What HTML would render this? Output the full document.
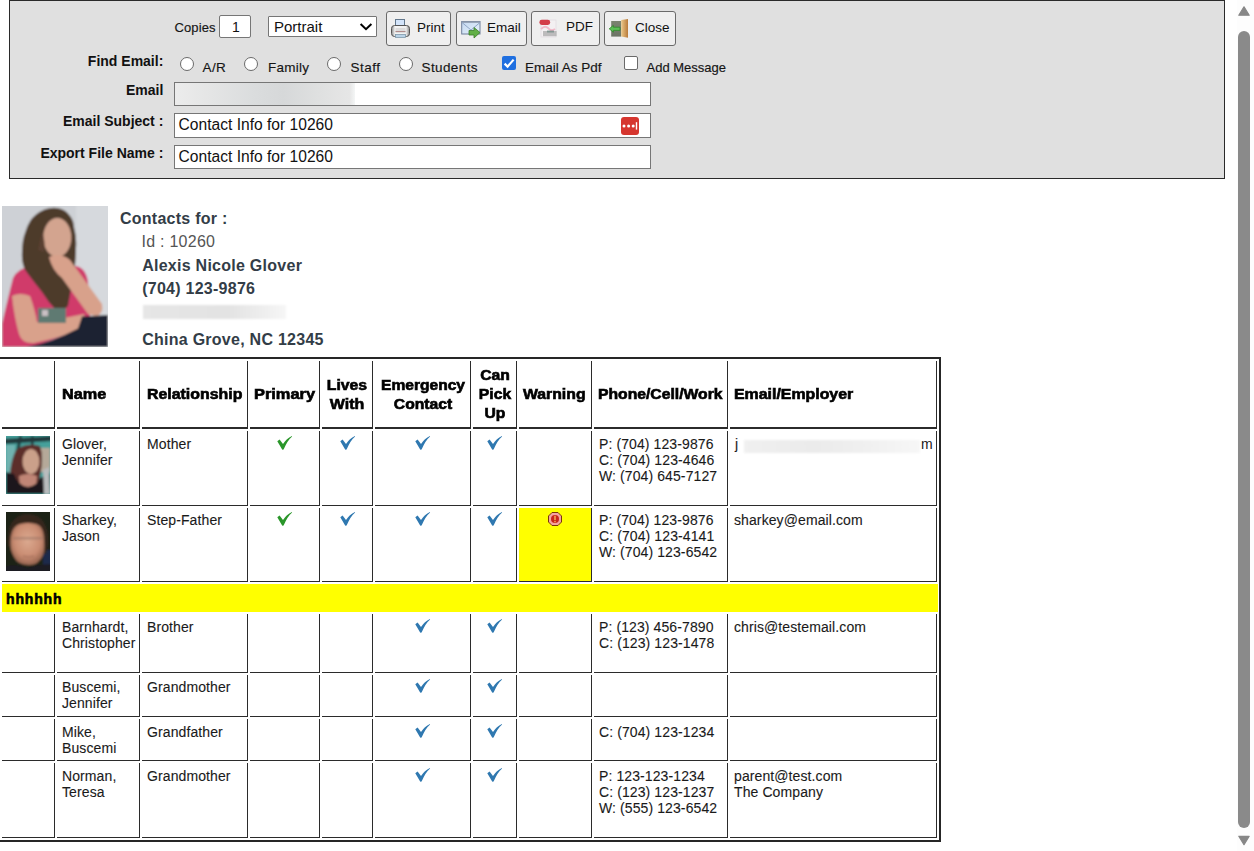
<!DOCTYPE html>
<html><head><meta charset="utf-8"><style>
html,body{margin:0;padding:0;}
body{width:1254px;height:851px;overflow:hidden;position:relative;background:#fff;font-family:"Liberation Sans", sans-serif;}
.t{position:absolute;white-space:nowrap;}
.box{position:absolute;border:1px solid #767676;background:#fff;}
.btn{position:absolute;border:1px solid #6a6a6a;border-radius:3px;background:#efefef;}
.radio{position:absolute;width:12px;height:12px;border:1px solid #6a6a6a;border-radius:50%;background:#fff;}
.cell{position:absolute;box-sizing:border-box;border-style:solid;border-color:transparent #2b2b2b #2b2b2b transparent;border-width:0 1px 1px 0;}
</style></head><body>
<div style="position:absolute;left:9px;top:0;width:1214px;height:177px;border:1px solid #2a2a2a;background:#e0e0e0"></div>
<div class="t" style="left:174.5px;top:18px;font-size:13px;line-height:20px;font-weight:normal;color:#151515;-webkit-text-stroke:0.15px #151515;letter-spacing:0.1px">Copies</div>
<div class="box" style="left:219px;top:15px;width:30px;height:21px;border-radius:2px"></div>
<div class="t" style="left:36px;width:400px;text-align:center;top:17px;font-size:14px;line-height:20px;font-weight:normal;color:#111;">1</div>
<div class="box" style="left:268px;top:16px;width:107px;height:19px;border-radius:1px"></div>
<div class="t" style="left:274px;top:16.5px;font-size:15px;line-height:20px;font-weight:normal;color:#111;">Portrait</div>
<svg style="position:absolute;left:359px;top:21px" width="14" height="10" viewBox="0 0 14 10"><path d="M1.6 3 L7 8.2 L12.4 3" fill="none" stroke="#000" stroke-width="2"/></svg>
<div class="btn" style="left:386px;top:11px;width:63px;height:33px"></div>
<svg style="position:absolute;left:390px;top:18px" width="21" height="21" viewBox="0 0 21 21"><defs><linearGradient id="pg" x1="0" y1="0" x2="1" y2="0"><stop offset="0" stop-color="#8c8c8c"/><stop offset="0.2" stop-color="#f4f4f4"/><stop offset="0.8" stop-color="#f0f0f0"/><stop offset="1" stop-color="#8a8a8a"/></linearGradient></defs><rect x="5.5" y="1.5" width="9" height="8" fill="#d3e4fa" stroke="#62778c" stroke-width="1"/><rect x="1.5" y="7.5" width="18" height="11" rx="3" fill="url(#pg)" stroke="#555" stroke-width="1"/><rect x="5.5" y="10" width="10" height="5" fill="#dcdcdc"/><rect x="5.5" y="13" width="10" height="1" fill="#b08a8a"/><rect x="5.5" y="16.5" width="10" height="3" fill="#b9d2e6" stroke="#7f99ab" stroke-width="0.8"/></svg>
<div class="t" style="left:417px;top:18px;font-size:13.5px;line-height:20px;font-weight:normal;color:#111;">Print</div>
<div class="btn" style="left:456px;top:11px;width:69px;height:33px"></div>
<svg style="position:absolute;left:460px;top:20px" width="22" height="19" viewBox="0 0 22 19"><defs><linearGradient id="eg" x1="0" y1="0" x2="1" y2="1"><stop offset="0" stop-color="#c4d8f0"/><stop offset="1" stop-color="#e6f2fb"/></linearGradient></defs><rect x="1.7" y="1.5" width="18.3" height="12.5" fill="url(#eg)" stroke="#6f7f9a" stroke-width="1"/><rect x="1.7" y="1.2" width="18.3" height="1.6" fill="#8a97aa"/><path d="M2 2.5 L11 10 L20 2.5" fill="none" stroke="#90a6c6" stroke-width="1"/><path d="M9 10.5 h5 v-3 l6 5 l-6 5.5 v-3 h-5z" fill="#62b046" stroke="#3a7e28" stroke-width="0.8" stroke-linejoin="round"/></svg>
<div class="t" style="left:487px;top:18px;font-size:13.5px;line-height:20px;font-weight:normal;color:#111;">Email</div>
<div class="btn" style="left:531px;top:11px;width:67px;height:33px"></div>
<svg style="position:absolute;left:538px;top:18px" width="20" height="20" viewBox="0 0 20 20"><defs><filter id="pb" x="-20%" y="-20%" width="140%" height="140%"><feGaussianBlur stdDeviation="0.5"/></filter></defs><g filter="url(#pb)"><rect x="3" y="2" width="15" height="17" fill="#f3f0f2" stroke="#e2dde0" stroke-width="0.8"/><rect x="1.4" y="1.8" width="10.8" height="5.2" rx="2.4" fill="#d33c4a"/><path d="M3 11 Q7 7 10 10 Q13 14 17 11" fill="none" stroke="#f0b8c8" stroke-width="2"/><rect x="5" y="13" width="13.6" height="5.2" fill="#a9a9a9" opacity="0.75"/><rect x="9" y="12.5" width="7" height="2" fill="#5f7f78" opacity="0.6"/></g></svg>
<div class="t" style="left:566px;top:17px;font-size:13.5px;line-height:20px;font-weight:normal;color:#111;">PDF</div>
<div class="btn" style="left:604px;top:11px;width:70px;height:33px"></div>
<svg style="position:absolute;left:608px;top:18px" width="22" height="21" viewBox="0 0 22 21"><defs><linearGradient id="dg" x1="0" y1="0" x2="1" y2="0"><stop offset="0" stop-color="#ecc888"/><stop offset="1" stop-color="#b87a3a"/></linearGradient><linearGradient id="fgc" x1="0" y1="0" x2="0" y2="1"><stop offset="0" stop-color="#7b8470"/><stop offset="1" stop-color="#6c7466"/></linearGradient></defs><rect x="3.2" y="3" width="10" height="15.6" fill="url(#fgc)"/><path d="M13.2 2 L20 1 L20 19.8 L13.2 18.6Z" fill="url(#dg)"/><path d="M1.2 10.8 L5.4 7.4 L5.4 9.2 L12 9.2 L12 12.4 L5.4 12.4 L5.4 14.2Z" fill="#5cbf56" stroke="#2f8a2a" stroke-width="0.8" stroke-linejoin="round"/></svg>
<div class="t" style="left:635px;top:18px;font-size:13.5px;line-height:20px;font-weight:normal;color:#111;">Close</div>
<div class="t" style="right:1090.7px;top:51px;font-size:14px;line-height:20px;font-weight:bold;color:#111;">Find Email:</div>
<div class="radio" style="left:180px;top:56.5px"></div>
<div class="radio" style="left:244px;top:56.5px"></div>
<div class="radio" style="left:327px;top:56.5px"></div>
<div class="radio" style="left:399px;top:56.5px"></div>
<div class="t" style="left:202.5px;top:58px;font-size:13.5px;line-height:20px;font-weight:normal;color:#151515;-webkit-text-stroke:0.15px #151515;letter-spacing:0.4px">A/R</div>
<div class="t" style="left:268px;top:58px;font-size:13.5px;line-height:20px;font-weight:normal;color:#151515;-webkit-text-stroke:0.15px #151515;letter-spacing:0.25px">Family</div>
<div class="t" style="left:350.5px;top:58px;font-size:13.5px;line-height:20px;font-weight:normal;color:#151515;-webkit-text-stroke:0.15px #151515;letter-spacing:0.5px">Staff</div>
<div class="t" style="left:421.5px;top:58px;font-size:13.5px;line-height:20px;font-weight:normal;color:#151515;-webkit-text-stroke:0.15px #151515;letter-spacing:0.4px">Students</div>
<div style="position:absolute;left:502px;top:56px;width:14px;height:14px;border-radius:2px;background:#1f6fe0"></div>
<svg style="position:absolute;left:502px;top:56px" width="14" height="14" viewBox="0 0 14 14"><path d="M2.6 7.6 L5.6 10.6 L11.6 3.6" fill="none" stroke="#fff" stroke-width="2.2"/></svg>
<div class="t" style="left:525px;top:58px;font-size:13.5px;line-height:20px;font-weight:normal;color:#151515;-webkit-text-stroke:0.15px #151515">Email As Pdf</div>
<div style="position:absolute;left:624px;top:56px;width:12px;height:12px;border-radius:2px;border:1px solid #6a6a6a;background:#fff"></div>
<div class="t" style="left:646.5px;top:58px;font-size:13px;line-height:20px;font-weight:normal;color:#151515;-webkit-text-stroke:0.15px #151515">Add Message</div>
<div class="t" style="right:1090.7px;top:80px;font-size:14px;line-height:20px;font-weight:bold;color:#111;">Email</div>
<div class="t" style="right:1090.7px;top:111px;font-size:14px;line-height:20px;font-weight:bold;color:#111;">Email Subject :</div>
<div class="t" style="right:1090.7px;top:143px;font-size:14px;line-height:20px;font-weight:bold;color:#111;">Export File Name :</div>
<div class="box" style="left:174px;top:82px;width:475px;height:22px"></div>
<div style="position:absolute;left:175px;top:83px;width:180px;height:22px;background:linear-gradient(90deg,#ececec 0%,#e4e5e5 20%,#dadcdd 45%,#d6d8d9 60%,#dfe0e0 80%,#e6e6e6 97%,#f4f6f6 100%)"></div>
<div class="box" style="left:174px;top:113px;width:475px;height:23px"></div>
<div class="box" style="left:174px;top:145px;width:475px;height:22px"></div>
<div class="t" style="left:178.6px;top:115px;font-size:15.6px;line-height:20px;font-weight:normal;color:#111;">Contact Info for 10260</div>
<div class="t" style="left:178.6px;top:147px;font-size:15.6px;line-height:20px;font-weight:normal;color:#111;">Contact Info for 10260</div>
<div style="position:absolute;left:621px;top:117px;width:18px;height:18px;border-radius:3px;background:#d6362f"></div>
<svg style="position:absolute;left:621px;top:117px" width="18" height="18" viewBox="0 0 18 18"><circle cx="3" cy="9" r="1.5" fill="#fff"/><circle cx="7.6" cy="9" r="1.5" fill="#fff"/><circle cx="12.2" cy="9" r="1.5" fill="#fff"/><rect x="14.8" y="5.2" width="1.4" height="7.4" fill="#fff"/></svg>
<svg style="position:absolute;left:2px;top:206px" width="106" height="141" viewBox="0 0 106 141">
<defs><filter id="bl" x="-10%" y="-10%" width="120%" height="120%"><feGaussianBlur stdDeviation="1.1"/></filter>
<clipPath id="cp"><rect width="106" height="141"/></clipPath></defs>
<rect width="106" height="141" fill="#d0d3d8"/>
<g clip-path="url(#cp)" filter="url(#bl)">
<rect x="-5" y="-5" width="116" height="151" fill="#ced1d6"/>
<rect x="74" y="-5" width="40" height="120" fill="#d6d9dd"/>
<path d="M11 72 Q16 62 30 60 L74 60 Q84 62 86 76 L88 112 L76 124 L30 141 L0 141 L0 118 Q4 100 11 72Z" fill="#d03a6a"/>
<path d="M52 1.7 Q62 2 66 7.6 Q72 14 72 21 Q75 32 74 42 Q74 52 73 59 Q70 78 66 100 Q60 106 54 104 Q46 96 40 86 Q32 76 26 68 Q19 60 20 46 Q20 34 23.7 25 Q27 14 34 8.5 Q42 2 52 1.7Z" fill="#4e3a2c"/>
<ellipse cx="55.3" cy="31.5" rx="14" ry="19.5" fill="#d3a48f"/>
<path d="M40 26 Q44 36 42 46 L36 44 Q38 34 40 26Z" fill="#5a4030"/>
<path d="M47 51 Q58 46 68 54 L100 98 Q102 108 94 110 L86 108 L60 72 Q50 64 47 51Z" fill="#d8a18b"/>
<path d="M10 90 Q18 86 28 90 Q33 104 35 116 Q50 114 62 112 L82 108 Q86 118 78 124 Q56 132 32 137 Q20 138 17 128 Q12 110 10 90Z" fill="#d9a18b"/>
<path d="M36 102 L64 102 L64 117 L36 117Z" fill="#5f7a72"/>
<path d="M40 104 L46 104 L46 110 L40 110Z" fill="#c9c0c4"/>
<path d="M25 141 Q50 136 76 122.4 L80 110.6 L106 109 L106 141Z" fill="#1c2130"/>
</g></svg>
<div class="t" style="left:120px;top:209px;font-size:16px;line-height:20px;font-weight:bold;color:#333d47;letter-spacing:0.25px">Contacts for :</div>
<div class="t" style="left:141.5px;top:232px;font-size:16px;line-height:20px;font-weight:normal;color:#555;letter-spacing:0.25px">Id : 10260</div>
<div class="t" style="left:142.2px;top:256px;font-size:16px;line-height:20px;font-weight:bold;color:#333d47;letter-spacing:0.26px">Alexis Nicole Glover</div>
<div class="t" style="left:142.2px;top:279px;font-size:16px;line-height:20px;font-weight:bold;color:#333d47;letter-spacing:0.26px">(704) 123-9876</div>
<div style="position:absolute;left:143px;top:305px;width:143px;height:14px;background:linear-gradient(90deg,#e6e6e6,#e3e3e3 60%,#ececec 80%,#f6f6f6);filter:blur(1px)"></div>
<div class="t" style="left:142.2px;top:330px;font-size:16px;line-height:20px;font-weight:bold;color:#333d47;letter-spacing:0.26px">China Grove, NC 12345</div>
<div style="position:absolute;left:-2px;top:357px;width:939px;height:481px;border:2px solid #262626"></div>
<div class="cell" style="left:2px;top:361px;width:53px;height:68px;border-bottom-width:2px;background:transparent"></div>
<div class="cell" style="left:57px;top:361px;width:83px;height:68px;border-bottom-width:2px;background:transparent"></div>
<div class="cell" style="left:142px;top:361px;width:106px;height:68px;border-bottom-width:2px;background:transparent"></div>
<div class="cell" style="left:250px;top:361px;width:70px;height:68px;border-bottom-width:2px;background:transparent"></div>
<div class="cell" style="left:322px;top:361px;width:51px;height:68px;border-bottom-width:2px;background:transparent"></div>
<div class="cell" style="left:375px;top:361px;width:96px;height:68px;border-bottom-width:2px;background:transparent"></div>
<div class="cell" style="left:473px;top:361px;width:44px;height:68px;border-bottom-width:2px;background:transparent"></div>
<div class="cell" style="left:519px;top:361px;width:73px;height:68px;border-bottom-width:2px;background:transparent"></div>
<div class="cell" style="left:594px;top:361px;width:134px;height:68px;border-bottom-width:2px;background:transparent"></div>
<div class="cell" style="left:730px;top:361px;width:207px;height:68px;border-bottom-width:2px;background:transparent"></div>
<div class="cell" style="left:2px;top:431px;width:53px;height:75px;border-bottom-width:1px;background:transparent"></div>
<div class="cell" style="left:57px;top:431px;width:83px;height:75px;border-bottom-width:1px;background:transparent"></div>
<div class="cell" style="left:142px;top:431px;width:106px;height:75px;border-bottom-width:1px;background:transparent"></div>
<div class="cell" style="left:250px;top:431px;width:70px;height:75px;border-bottom-width:1px;background:transparent"></div>
<div class="cell" style="left:322px;top:431px;width:51px;height:75px;border-bottom-width:1px;background:transparent"></div>
<div class="cell" style="left:375px;top:431px;width:96px;height:75px;border-bottom-width:1px;background:transparent"></div>
<div class="cell" style="left:473px;top:431px;width:44px;height:75px;border-bottom-width:1px;background:transparent"></div>
<div class="cell" style="left:519px;top:431px;width:73px;height:75px;border-bottom-width:1px;background:transparent"></div>
<div class="cell" style="left:594px;top:431px;width:134px;height:75px;border-bottom-width:1px;background:transparent"></div>
<div class="cell" style="left:730px;top:431px;width:207px;height:75px;border-bottom-width:1px;background:transparent"></div>
<div class="cell" style="left:2px;top:508px;width:53px;height:74px;border-bottom-width:1px;background:transparent"></div>
<div class="cell" style="left:57px;top:508px;width:83px;height:74px;border-bottom-width:1px;background:transparent"></div>
<div class="cell" style="left:142px;top:508px;width:106px;height:74px;border-bottom-width:1px;background:transparent"></div>
<div class="cell" style="left:250px;top:508px;width:70px;height:74px;border-bottom-width:1px;background:transparent"></div>
<div class="cell" style="left:322px;top:508px;width:51px;height:74px;border-bottom-width:1px;background:transparent"></div>
<div class="cell" style="left:375px;top:508px;width:96px;height:74px;border-bottom-width:1px;background:transparent"></div>
<div class="cell" style="left:473px;top:508px;width:44px;height:74px;border-bottom-width:1px;background:transparent"></div>
<div class="cell" style="left:519px;top:508px;width:73px;height:74px;border-bottom-width:1px;background:#ffff00"></div>
<div class="cell" style="left:594px;top:508px;width:134px;height:74px;border-bottom-width:1px;background:transparent"></div>
<div class="cell" style="left:730px;top:508px;width:207px;height:74px;border-bottom-width:1px;background:transparent"></div>
<div class="cell" style="left:2px;top:614px;width:53px;height:59px;border-bottom-width:1px;background:transparent"></div>
<div class="cell" style="left:57px;top:614px;width:83px;height:59px;border-bottom-width:1px;background:transparent"></div>
<div class="cell" style="left:142px;top:614px;width:106px;height:59px;border-bottom-width:1px;background:transparent"></div>
<div class="cell" style="left:250px;top:614px;width:70px;height:59px;border-bottom-width:1px;background:transparent"></div>
<div class="cell" style="left:322px;top:614px;width:51px;height:59px;border-bottom-width:1px;background:transparent"></div>
<div class="cell" style="left:375px;top:614px;width:96px;height:59px;border-bottom-width:1px;background:transparent"></div>
<div class="cell" style="left:473px;top:614px;width:44px;height:59px;border-bottom-width:1px;background:transparent"></div>
<div class="cell" style="left:519px;top:614px;width:73px;height:59px;border-bottom-width:1px;background:transparent"></div>
<div class="cell" style="left:594px;top:614px;width:134px;height:59px;border-bottom-width:1px;background:transparent"></div>
<div class="cell" style="left:730px;top:614px;width:207px;height:59px;border-bottom-width:1px;background:transparent"></div>
<div class="cell" style="left:2px;top:675px;width:53px;height:42px;border-bottom-width:1px;background:transparent"></div>
<div class="cell" style="left:57px;top:675px;width:83px;height:42px;border-bottom-width:1px;background:transparent"></div>
<div class="cell" style="left:142px;top:675px;width:106px;height:42px;border-bottom-width:1px;background:transparent"></div>
<div class="cell" style="left:250px;top:675px;width:70px;height:42px;border-bottom-width:1px;background:transparent"></div>
<div class="cell" style="left:322px;top:675px;width:51px;height:42px;border-bottom-width:1px;background:transparent"></div>
<div class="cell" style="left:375px;top:675px;width:96px;height:42px;border-bottom-width:1px;background:transparent"></div>
<div class="cell" style="left:473px;top:675px;width:44px;height:42px;border-bottom-width:1px;background:transparent"></div>
<div class="cell" style="left:519px;top:675px;width:73px;height:42px;border-bottom-width:1px;background:transparent"></div>
<div class="cell" style="left:594px;top:675px;width:134px;height:42px;border-bottom-width:1px;background:transparent"></div>
<div class="cell" style="left:730px;top:675px;width:207px;height:42px;border-bottom-width:1px;background:transparent"></div>
<div class="cell" style="left:2px;top:719px;width:53px;height:42px;border-bottom-width:1px;background:transparent"></div>
<div class="cell" style="left:57px;top:719px;width:83px;height:42px;border-bottom-width:1px;background:transparent"></div>
<div class="cell" style="left:142px;top:719px;width:106px;height:42px;border-bottom-width:1px;background:transparent"></div>
<div class="cell" style="left:250px;top:719px;width:70px;height:42px;border-bottom-width:1px;background:transparent"></div>
<div class="cell" style="left:322px;top:719px;width:51px;height:42px;border-bottom-width:1px;background:transparent"></div>
<div class="cell" style="left:375px;top:719px;width:96px;height:42px;border-bottom-width:1px;background:transparent"></div>
<div class="cell" style="left:473px;top:719px;width:44px;height:42px;border-bottom-width:1px;background:transparent"></div>
<div class="cell" style="left:519px;top:719px;width:73px;height:42px;border-bottom-width:1px;background:transparent"></div>
<div class="cell" style="left:594px;top:719px;width:134px;height:42px;border-bottom-width:1px;background:transparent"></div>
<div class="cell" style="left:730px;top:719px;width:207px;height:42px;border-bottom-width:1px;background:transparent"></div>
<div class="cell" style="left:2px;top:763px;width:53px;height:75px;border-bottom-width:1px;background:transparent"></div>
<div class="cell" style="left:57px;top:763px;width:83px;height:75px;border-bottom-width:1px;background:transparent"></div>
<div class="cell" style="left:142px;top:763px;width:106px;height:75px;border-bottom-width:1px;background:transparent"></div>
<div class="cell" style="left:250px;top:763px;width:70px;height:75px;border-bottom-width:1px;background:transparent"></div>
<div class="cell" style="left:322px;top:763px;width:51px;height:75px;border-bottom-width:1px;background:transparent"></div>
<div class="cell" style="left:375px;top:763px;width:96px;height:75px;border-bottom-width:1px;background:transparent"></div>
<div class="cell" style="left:473px;top:763px;width:44px;height:75px;border-bottom-width:1px;background:transparent"></div>
<div class="cell" style="left:519px;top:763px;width:73px;height:75px;border-bottom-width:1px;background:transparent"></div>
<div class="cell" style="left:594px;top:763px;width:134px;height:75px;border-bottom-width:1px;background:transparent"></div>
<div class="cell" style="left:730px;top:763px;width:207px;height:75px;border-bottom-width:1px;background:transparent"></div>
<div style="position:absolute;left:2px;top:584px;width:936px;height:28px;background:#ffff00"></div>
<div class="t" style="left:6px;top:589px;font-size:14px;line-height:20px;font-weight:bold;color:#000;letter-spacing:0.85px;-webkit-text-stroke:0.6px #000">hhhhhh</div>
<div class="t" style="left:62px;top:384px;font-size:14px;line-height:20px;font-weight:bold;color:#000;-webkit-text-stroke:0.6px #000;transform:scaleX(1.162);transform-origin:left top">Name</div>
<div class="t" style="left:146.7px;top:384px;font-size:14px;line-height:20px;font-weight:bold;color:#000;-webkit-text-stroke:0.6px #000;transform:scaleX(1.135);transform-origin:left top">Relationship</div>
<div class="t" style="left:254px;top:384px;font-size:14px;line-height:20px;font-weight:bold;color:#000;-webkit-text-stroke:0.6px #000;transform:scaleX(1.17);transform-origin:left top">Primary</div>
<div class="t" style="left:147.2px;width:400px;text-align:center;top:375px;font-size:14px;line-height:20px;font-weight:bold;color:#000;-webkit-text-stroke:0.6px #000;transform:scaleX(1.125);transform-origin:center top">Lives</div>
<div class="t" style="left:146.89999999999998px;width:400px;text-align:center;top:394px;font-size:14px;line-height:20px;font-weight:bold;color:#000;-webkit-text-stroke:0.6px #000;transform:scaleX(1.14);transform-origin:center top">With</div>
<div class="t" style="left:222.8px;width:400px;text-align:center;top:375px;font-size:14px;line-height:20px;font-weight:bold;color:#000;-webkit-text-stroke:0.6px #000;transform:scaleX(1.112);transform-origin:center top">Emergency</div>
<div class="t" style="left:223px;width:400px;text-align:center;top:394px;font-size:14px;line-height:20px;font-weight:bold;color:#000;-webkit-text-stroke:0.6px #000;transform:scaleX(1.12);transform-origin:center top">Contact</div>
<div class="t" style="left:294.6px;width:400px;text-align:center;top:365px;font-size:14px;line-height:20px;font-weight:bold;color:#000;-webkit-text-stroke:0.6px #000;transform:scaleX(1.12);transform-origin:center top">Can</div>
<div class="t" style="left:294.6px;width:400px;text-align:center;top:384px;font-size:14px;line-height:20px;font-weight:bold;color:#000;-webkit-text-stroke:0.6px #000;transform:scaleX(1.12);transform-origin:center top">Pick</div>
<div class="t" style="left:294.6px;width:400px;text-align:center;top:403px;font-size:14px;line-height:20px;font-weight:bold;color:#000;-webkit-text-stroke:0.6px #000;transform:scaleX(1.12);transform-origin:center top">Up</div>
<div class="t" style="left:522.7px;top:384px;font-size:14px;line-height:20px;font-weight:bold;color:#000;-webkit-text-stroke:0.6px #000;transform:scaleX(1.127);transform-origin:left top">Warning</div>
<div class="t" style="left:597.8px;top:384px;font-size:14px;line-height:20px;font-weight:bold;color:#000;-webkit-text-stroke:0.6px #000;transform:scaleX(1.122);transform-origin:left top">Phone/Cell/Work</div>
<div class="t" style="left:734px;top:384px;font-size:14px;line-height:20px;font-weight:bold;color:#000;-webkit-text-stroke:0.6px #000;transform:scaleX(1.135);transform-origin:left top">Email/Employer</div>
<svg style="position:absolute;left:6px;top:436px" width="44" height="58" viewBox="0 0 44 58"><defs><filter id="b1"><feGaussianBlur stdDeviation="0.9"/></filter><clipPath id="c1"><rect width="44" height="58"/></clipPath></defs><rect width="44" height="58" fill="#3c9290"/><g clip-path="url(#c1)" filter="url(#b1)"><rect x="-2" y="-2" width="48" height="62" fill="#44a09b"/><rect x="0" y="9" width="9" height="28" fill="#6fb3b0"/><path d="M-2 3 L46 0 L46 5 L-2 8Z" fill="#20393b"/><path d="M13 0 L16 0 L12 22 L9 22Z" fill="#20393b"/><rect x="25" y="0" width="2.5" height="12" fill="#20393b"/><rect x="33" y="12" width="11" height="24" fill="#b5a999"/><path d="M4 58 Q2 30 10 14 Q20 6 34 10 Q38 20 34 40 L30 58Z" fill="#5c2f2b"/><ellipse cx="25" cy="25.5" rx="8.5" ry="12.5" fill="#caa08a"/><path d="M13 40 Q22 36 31 40 L30 52 L14 52Z" fill="#c08576"/><path d="M0 58 L0 36 L8 38 Q12 50 22 51 Q31 50 34 42 L44 38 L44 58Z" fill="#1b191c"/><path d="M37 34 L43 31 L44 58 L38 58Z" fill="#b9bcbe"/></g></svg>
<div class="t" style="left:62px;top:434px;font-size:14px;line-height:20px;font-weight:normal;color:#1a1a1a;letter-spacing:0.1px;-webkit-text-stroke:0.1px #1a1a1a">Glover,</div>
<div class="t" style="left:62px;top:450px;font-size:14px;line-height:20px;font-weight:normal;color:#1a1a1a;letter-spacing:0.1px;-webkit-text-stroke:0.1px #1a1a1a">Jennifer</div>
<div class="t" style="left:147px;top:434px;font-size:14px;line-height:20px;font-weight:normal;color:#1a1a1a;letter-spacing:0.1px;-webkit-text-stroke:0.1px #1a1a1a">Mother</div>
<svg style="position:absolute;left:277px;top:436px" width="16" height="15" viewBox="0 0 16 15"><path d="M0.3,5.2 L2.6,3.4 L6,8 Q9.5,2.5 14.9,0 L15.1,0.6 Q10.5,4.5 6.6,13.6 L5.3,13.7 Z" fill="#2a962a"/></svg>
<svg style="position:absolute;left:339.5px;top:436px" width="16" height="15" viewBox="0 0 16 15"><path d="M0.3,5.2 L2.6,3.4 L6,8 Q9.5,2.5 14.9,0 L15.1,0.6 Q10.5,4.5 6.6,13.6 L5.3,13.7 Z" fill="#2f78b0"/></svg>
<svg style="position:absolute;left:414.5px;top:436px" width="16" height="15" viewBox="0 0 16 15"><path d="M0.3,5.2 L2.6,3.4 L6,8 Q9.5,2.5 14.9,0 L15.1,0.6 Q10.5,4.5 6.6,13.6 L5.3,13.7 Z" fill="#2f78b0"/></svg>
<svg style="position:absolute;left:486.5px;top:436px" width="16" height="15" viewBox="0 0 16 15"><path d="M0.3,5.2 L2.6,3.4 L6,8 Q9.5,2.5 14.9,0 L15.1,0.6 Q10.5,4.5 6.6,13.6 L5.3,13.7 Z" fill="#2f78b0"/></svg>
<div class="t" style="left:599px;top:434px;font-size:14px;line-height:20px;font-weight:normal;color:#1a1a1a;letter-spacing:0.1px;-webkit-text-stroke:0.1px #1a1a1a">P: (704) 123-9876</div>
<div class="t" style="left:599px;top:450px;font-size:14px;line-height:20px;font-weight:normal;color:#1a1a1a;letter-spacing:0.1px;-webkit-text-stroke:0.1px #1a1a1a">C: (704) 123-4646</div>
<div class="t" style="left:599px;top:466px;font-size:14px;line-height:20px;font-weight:normal;color:#1a1a1a;letter-spacing:0.1px;-webkit-text-stroke:0.1px #1a1a1a">W: (704) 645-7127</div>
<div class="t" style="left:735px;top:434px;font-size:14px;line-height:20px;font-weight:normal;color:#1a1a1a;letter-spacing:0.1px;-webkit-text-stroke:0.1px #1a1a1a">j</div>
<div style="position:absolute;left:744px;top:440px;width:176px;height:13px;background:linear-gradient(90deg,#f0f0f0,#ebebeb 40%,#f0f0f0 70%,#f7f7f7);filter:blur(1.2px)"></div>
<div class="t" style="left:921px;top:434px;font-size:14px;line-height:20px;font-weight:normal;color:#1a1a1a;">m</div>
<svg style="position:absolute;left:6px;top:512px" width="44" height="59" viewBox="0 0 44 59"><defs><filter id="b2"><feGaussianBlur stdDeviation="1"/></filter><clipPath id="c2"><rect width="44" height="59"/></clipPath><radialGradient id="fg" cx="0.5" cy="0.42" r="0.55"><stop offset="0" stop-color="#dcaa90"/><stop offset="0.7" stop-color="#c98c72"/><stop offset="1" stop-color="#9e6a55"/></radialGradient></defs><rect width="44" height="59" fill="#1f2419"/><g clip-path="url(#c2)" filter="url(#b2)"><rect x="-2" y="-2" width="48" height="63" fill="#1e2318"/><rect x="37" y="38" width="9" height="23" fill="#1d2b4c"/><path d="M2 34 Q0 3 22 2 Q43 3 42 32 L40 42 Z" fill="#35281e"/><path d="M4.5 30 Q5 14 14 12 Q22 10 30 12 Q38 14 38 28 Q39 38 37 43 Q33 53 23 53 Q12 53 8 45 Q4 38 4.5 30Z" fill="url(#fg)"/><path d="M7 25 L37 25 L37 27.5 L7 27.5Z" fill="#9a7565" opacity="0.6"/><path d="M17 44 Q22 46 28 44" stroke="#9c6a58" stroke-width="1" fill="none"/><path d="M-2 61 L0 54 Q10 52 22 56 Q34 52 46 52 L46 61Z" fill="#1a1c22"/></g></svg>
<div class="t" style="left:62px;top:510px;font-size:14px;line-height:20px;font-weight:normal;color:#1a1a1a;letter-spacing:0.1px;-webkit-text-stroke:0.1px #1a1a1a">Sharkey,</div>
<div class="t" style="left:62px;top:526px;font-size:14px;line-height:20px;font-weight:normal;color:#1a1a1a;letter-spacing:0.1px;-webkit-text-stroke:0.1px #1a1a1a">Jason</div>
<div class="t" style="left:147px;top:510px;font-size:14px;line-height:20px;font-weight:normal;color:#1a1a1a;letter-spacing:0.1px;-webkit-text-stroke:0.1px #1a1a1a">Step-Father</div>
<svg style="position:absolute;left:277px;top:512px" width="16" height="15" viewBox="0 0 16 15"><path d="M0.3,5.2 L2.6,3.4 L6,8 Q9.5,2.5 14.9,0 L15.1,0.6 Q10.5,4.5 6.6,13.6 L5.3,13.7 Z" fill="#2a962a"/></svg>
<svg style="position:absolute;left:339.5px;top:512px" width="16" height="15" viewBox="0 0 16 15"><path d="M0.3,5.2 L2.6,3.4 L6,8 Q9.5,2.5 14.9,0 L15.1,0.6 Q10.5,4.5 6.6,13.6 L5.3,13.7 Z" fill="#2f78b0"/></svg>
<svg style="position:absolute;left:414.5px;top:512px" width="16" height="15" viewBox="0 0 16 15"><path d="M0.3,5.2 L2.6,3.4 L6,8 Q9.5,2.5 14.9,0 L15.1,0.6 Q10.5,4.5 6.6,13.6 L5.3,13.7 Z" fill="#2f78b0"/></svg>
<svg style="position:absolute;left:486.5px;top:512px" width="16" height="15" viewBox="0 0 16 15"><path d="M0.3,5.2 L2.6,3.4 L6,8 Q9.5,2.5 14.9,0 L15.1,0.6 Q10.5,4.5 6.6,13.6 L5.3,13.7 Z" fill="#2f78b0"/></svg>
<svg style="position:absolute;left:548px;top:512px" width="14" height="14" viewBox="0 0 14 14"><path d="M4 0.5 H10 L13.5 4 V10 L10 13.5 H4 L0.5 10 V4Z" fill="#f4a3a0" stroke="#7a3408" stroke-width="1"/><circle cx="7" cy="7" r="4" fill="#c8241c"/><rect x="6.2" y="3.8" width="1.6" height="4.4" fill="#f7a050"/><rect x="6.2" y="9" width="1.6" height="1.3" fill="#f7a050"/></svg>
<div class="t" style="left:599px;top:510px;font-size:14px;line-height:20px;font-weight:normal;color:#1a1a1a;letter-spacing:0.1px;-webkit-text-stroke:0.1px #1a1a1a">P: (704) 123-9876</div>
<div class="t" style="left:599px;top:526px;font-size:14px;line-height:20px;font-weight:normal;color:#1a1a1a;letter-spacing:0.1px;-webkit-text-stroke:0.1px #1a1a1a">C: (704) 123-4141</div>
<div class="t" style="left:599px;top:542px;font-size:14px;line-height:20px;font-weight:normal;color:#1a1a1a;letter-spacing:0.1px;-webkit-text-stroke:0.1px #1a1a1a">W: (704) 123-6542</div>
<div class="t" style="left:734px;top:510px;font-size:14px;line-height:20px;font-weight:normal;color:#1a1a1a;letter-spacing:0.1px;-webkit-text-stroke:0.1px #1a1a1a">sharkey@email.com</div>
<div class="t" style="left:62px;top:617px;font-size:14px;line-height:20px;font-weight:normal;color:#1a1a1a;letter-spacing:0.1px;-webkit-text-stroke:0.1px #1a1a1a">Barnhardt,</div>
<div class="t" style="left:62px;top:633px;font-size:14px;line-height:20px;font-weight:normal;color:#1a1a1a;letter-spacing:0.1px;-webkit-text-stroke:0.1px #1a1a1a">Christopher</div>
<div class="t" style="left:147px;top:617px;font-size:14px;line-height:20px;font-weight:normal;color:#1a1a1a;letter-spacing:0.1px;-webkit-text-stroke:0.1px #1a1a1a">Brother</div>
<svg style="position:absolute;left:414.5px;top:619px" width="16" height="15" viewBox="0 0 16 15"><path d="M0.3,5.2 L2.6,3.4 L6,8 Q9.5,2.5 14.9,0 L15.1,0.6 Q10.5,4.5 6.6,13.6 L5.3,13.7 Z" fill="#2f78b0"/></svg>
<svg style="position:absolute;left:486.5px;top:619px" width="16" height="15" viewBox="0 0 16 15"><path d="M0.3,5.2 L2.6,3.4 L6,8 Q9.5,2.5 14.9,0 L15.1,0.6 Q10.5,4.5 6.6,13.6 L5.3,13.7 Z" fill="#2f78b0"/></svg>
<div class="t" style="left:599px;top:617px;font-size:14px;line-height:20px;font-weight:normal;color:#1a1a1a;letter-spacing:0.1px;-webkit-text-stroke:0.1px #1a1a1a">P: (123) 456-7890</div>
<div class="t" style="left:599px;top:633px;font-size:14px;line-height:20px;font-weight:normal;color:#1a1a1a;letter-spacing:0.1px;-webkit-text-stroke:0.1px #1a1a1a">C: (123) 123-1478</div>
<div class="t" style="left:734px;top:617px;font-size:14px;line-height:20px;font-weight:normal;color:#1a1a1a;letter-spacing:0.1px;-webkit-text-stroke:0.1px #1a1a1a">chris@testemail.com</div>
<div class="t" style="left:62px;top:677px;font-size:14px;line-height:20px;font-weight:normal;color:#1a1a1a;letter-spacing:0.1px;-webkit-text-stroke:0.1px #1a1a1a">Buscemi,</div>
<div class="t" style="left:62px;top:693px;font-size:14px;line-height:20px;font-weight:normal;color:#1a1a1a;letter-spacing:0.1px;-webkit-text-stroke:0.1px #1a1a1a">Jennifer</div>
<div class="t" style="left:147px;top:677px;font-size:14px;line-height:20px;font-weight:normal;color:#1a1a1a;letter-spacing:0.1px;-webkit-text-stroke:0.1px #1a1a1a">Grandmother</div>
<svg style="position:absolute;left:414.5px;top:679px" width="16" height="15" viewBox="0 0 16 15"><path d="M0.3,5.2 L2.6,3.4 L6,8 Q9.5,2.5 14.9,0 L15.1,0.6 Q10.5,4.5 6.6,13.6 L5.3,13.7 Z" fill="#2f78b0"/></svg>
<svg style="position:absolute;left:486.5px;top:679px" width="16" height="15" viewBox="0 0 16 15"><path d="M0.3,5.2 L2.6,3.4 L6,8 Q9.5,2.5 14.9,0 L15.1,0.6 Q10.5,4.5 6.6,13.6 L5.3,13.7 Z" fill="#2f78b0"/></svg>
<div class="t" style="left:62px;top:722px;font-size:14px;line-height:20px;font-weight:normal;color:#1a1a1a;letter-spacing:0.1px;-webkit-text-stroke:0.1px #1a1a1a">Mike,</div>
<div class="t" style="left:62px;top:738px;font-size:14px;line-height:20px;font-weight:normal;color:#1a1a1a;letter-spacing:0.1px;-webkit-text-stroke:0.1px #1a1a1a">Buscemi</div>
<div class="t" style="left:147px;top:722px;font-size:14px;line-height:20px;font-weight:normal;color:#1a1a1a;letter-spacing:0.1px;-webkit-text-stroke:0.1px #1a1a1a">Grandfather</div>
<svg style="position:absolute;left:414.5px;top:724px" width="16" height="15" viewBox="0 0 16 15"><path d="M0.3,5.2 L2.6,3.4 L6,8 Q9.5,2.5 14.9,0 L15.1,0.6 Q10.5,4.5 6.6,13.6 L5.3,13.7 Z" fill="#2f78b0"/></svg>
<svg style="position:absolute;left:486.5px;top:724px" width="16" height="15" viewBox="0 0 16 15"><path d="M0.3,5.2 L2.6,3.4 L6,8 Q9.5,2.5 14.9,0 L15.1,0.6 Q10.5,4.5 6.6,13.6 L5.3,13.7 Z" fill="#2f78b0"/></svg>
<div class="t" style="left:599px;top:722px;font-size:14px;line-height:20px;font-weight:normal;color:#1a1a1a;letter-spacing:0.1px;-webkit-text-stroke:0.1px #1a1a1a">C: (704) 123-1234</div>
<div class="t" style="left:62px;top:766px;font-size:14px;line-height:20px;font-weight:normal;color:#1a1a1a;letter-spacing:0.1px;-webkit-text-stroke:0.1px #1a1a1a">Norman,</div>
<div class="t" style="left:62px;top:782px;font-size:14px;line-height:20px;font-weight:normal;color:#1a1a1a;letter-spacing:0.1px;-webkit-text-stroke:0.1px #1a1a1a">Teresa</div>
<div class="t" style="left:147px;top:766px;font-size:14px;line-height:20px;font-weight:normal;color:#1a1a1a;letter-spacing:0.1px;-webkit-text-stroke:0.1px #1a1a1a">Grandmother</div>
<svg style="position:absolute;left:414.5px;top:768px" width="16" height="15" viewBox="0 0 16 15"><path d="M0.3,5.2 L2.6,3.4 L6,8 Q9.5,2.5 14.9,0 L15.1,0.6 Q10.5,4.5 6.6,13.6 L5.3,13.7 Z" fill="#2f78b0"/></svg>
<svg style="position:absolute;left:486.5px;top:768px" width="16" height="15" viewBox="0 0 16 15"><path d="M0.3,5.2 L2.6,3.4 L6,8 Q9.5,2.5 14.9,0 L15.1,0.6 Q10.5,4.5 6.6,13.6 L5.3,13.7 Z" fill="#2f78b0"/></svg>
<div class="t" style="left:599px;top:766px;font-size:14px;line-height:20px;font-weight:normal;color:#1a1a1a;letter-spacing:0.1px;-webkit-text-stroke:0.1px #1a1a1a">P: 123-123-1234</div>
<div class="t" style="left:599px;top:782px;font-size:14px;line-height:20px;font-weight:normal;color:#1a1a1a;letter-spacing:0.1px;-webkit-text-stroke:0.1px #1a1a1a">C: (123) 123-1237</div>
<div class="t" style="left:599px;top:798px;font-size:14px;line-height:20px;font-weight:normal;color:#1a1a1a;letter-spacing:0.1px;-webkit-text-stroke:0.1px #1a1a1a">W: (555) 123-6542</div>
<div class="t" style="left:734px;top:766px;font-size:14px;line-height:20px;font-weight:normal;color:#1a1a1a;letter-spacing:0.1px;-webkit-text-stroke:0.1px #1a1a1a">parent@test.com</div>
<div class="t" style="left:734px;top:782px;font-size:14px;line-height:20px;font-weight:normal;color:#1a1a1a;letter-spacing:0.1px;-webkit-text-stroke:0.1px #1a1a1a">The Company</div>
<div style="position:absolute;left:1237px;top:0;width:17px;height:851px;background:#fdfdfd"></div>
<svg style="position:absolute;left:1237px;top:0" width="17" height="851" viewBox="0 0 17 851"><path d="M1.8 15.2 L7 6.8 L12.2 15.2Z" fill="#878787" stroke="#878787" stroke-width="1.2" stroke-linejoin="round"/><rect x="1" y="31" width="12" height="797" rx="6" fill="#8a8a8a"/><path d="M1.8 836.3 L12.2 836.3 L7 844.7Z" fill="#878787" stroke="#878787" stroke-width="1.2" stroke-linejoin="round"/></svg>
</body></html>
